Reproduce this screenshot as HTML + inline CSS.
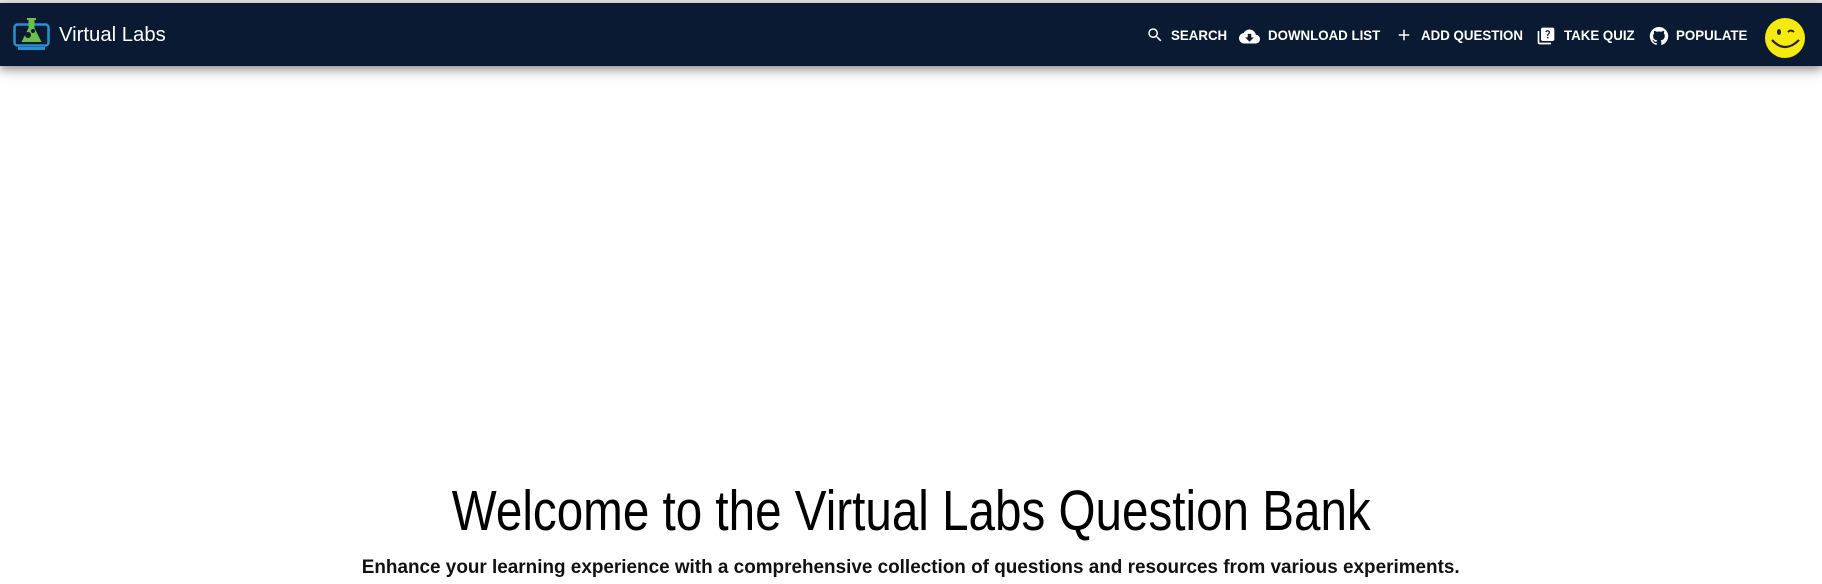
<!DOCTYPE html>
<html><head><meta charset="utf-8"><style>
html,body{margin:0;padding:0;width:1822px;height:584px;overflow:hidden;background:#fff;font-family:"Liberation Sans",sans-serif}
.top{position:absolute;left:0;top:0;width:1822px;height:3px;background:#e6e6e6}
.nav{position:absolute;left:0;top:3px;width:1822px;height:63px;background:#0b1a33;box-shadow:0 3px 8px rgba(0,0,0,.35),0 6px 14px rgba(0,0,0,.15)}
.brand{position:absolute;left:59px;top:21px;color:#fff;font-size:20.3px}
.it{position:absolute;top:24px;color:#fff;font-size:14px;font-weight:bold;letter-spacing:0;transform-origin:left center;transform:scaleX(.95);white-space:nowrap}
.ic{position:absolute;top:23px}
.smile{position:absolute;left:1765px;top:15px;width:40px;height:40px;border-radius:50%;background:#f5ea10}
h1{position:absolute;left:0;top:478px;width:1822px;text-align:center;margin:0;font-weight:normal;font-size:57px;color:#000}
h1 span{display:inline-block;transform:scaleX(.835)}
p{position:absolute;left:0;top:557px;width:1822px;text-align:center;margin:0;font-weight:bold;font-size:19px;color:#111}
p span{display:inline-block;transform:scaleX(.995)}
</style></head><body>
<div class="top"></div>
<div class="nav">
<svg style="position:absolute;left:13px;top:13px" width="37" height="36" viewBox="0 0 37 36">
<rect x="1.5" y="8.5" width="34" height="21" rx="3" fill="none" stroke="#2a8fd0" stroke-width="2.5"/>
<rect x="5" y="31" width="27" height="3" fill="#2a8fd0"/>
<path d="M14 2h9v2h-1.5v8l7 14h-20l7-14V4H14z" fill="#6cc04a"/>
<circle cx="15" cy="19" r="3" fill="#0b1a33"/><circle cx="20" cy="15" r="2" fill="#0b1a33"/>
</svg>
<div class="brand">Virtual Labs</div>
<svg class="ic" style="left:1146px" width="18" height="18" viewBox="0 0 24 24"><path fill="#fff" d="M15.5 14h-.79l-.28-.27A6.47 6.47 0 0 0 16 9.5 6.5 6.5 0 1 0 9.5 16c1.610 0 3.09-.59 4.23-1.57l.27.28v.79l5 4.99L20.49 19zm-6 0C7.01 14 5 11.990 5 9.5S7.01 5 9.5 5 14 7.01 14 9.5 11.99 14 9.5 14"/></svg>
<div class="it" style="left:1171px">SEARCH</div>
<svg class="ic" style="left:1239px" width="21" height="21" viewBox="0 0 24 24"><path fill="#fff" d="M19.35 10.04A7.49 7.49 0 0 0 12 4C9.11 4 6.6 5.64 5.35 8.04A5.994 5.994 0 0 0 0 14c0 3.31 2.69 6 6 6h13c2.76 0 5-2.24 5-5 0-2.64-2.05-4.78-4.65-4.96M17 13l-5 5-5-5h3V9h4v4z"/></svg>
<div class="it" style="left:1268px">DOWNLOAD LIST</div>
<svg class="ic" style="left:1395px" width="18" height="18" viewBox="0 0 24 24"><path fill="#fff" d="M19 13h-6v6h-2v-6H5v-2h6V5h2v6h6z"/></svg>
<div class="it" style="left:1421px">ADD QUESTION</div>
<svg class="ic" style="left:1536px" width="20" height="20" viewBox="0 0 24 24"><path fill="#fff" d="M4 6H2v14c0 1.1.9 2 2 2h14v-2H4zm16-4H8c-1.1 0-2 .9-2 2v12c0 1.1.9 2 2 2h12c1.1 0 2-.9 2-2V4c0-1.1-.9-2-2-2m-5.99 13c-.59 0-1.05-.47-1.05-1.05 0-.59.47-1.04 1.05-1.04.59 0 1.04.45 1.04 1.04 0 .58-.45 1.05-1.04 1.05m2.5-6.17c-.63.93-1.23 1.21-1.560 1.81-.13.24-.18.4-.18 1.18h-1.52c0-.41-.06-1.08.26-1.65.41-.73 1.18-1.16 1.63-1.8.48-.68.21-1.94-1.14-1.94-.88 0-1.32.67-1.5 1.23l-1.37-.57C11.51 5.96 12.52 5 13.99 5c1.23 0 2.08.56 2.51 1.26.37.61.58 1.73.01 2.57"/></svg>
<div class="it" style="left:1564px">TAKE QUIZ</div>
<svg class="ic" style="left:1649px" width="20" height="20" viewBox="0 0 24 24"><path fill="#fff" d="M12 1.27a11 11 0 0 0-3.48 21.46c.55.09.73-.28.73-.55v-1.84c-3.03.64-3.67-1.46-3.67-1.46-.55-1.29-1.28-1.65-1.28-1.65-.92-.65.1-.65.1-.65 1.1 0 1.73 1.1 1.73 1.1.92 1.65 2.57 1.2 3.21.92a2 2 0 0 1 .64-1.47c-2.470-.27-5.04-1.19-5.04-5.5 0-1.1.46-2.1 1.2-2.84a3.76 3.76 0 0 1 0-2.93s.91-.28 3.11 1.1c1.8-.49 3.7-.49 5.5 0 2.1-1.38 3.02-1.1 3.02-1.1a3.76 3.76 0 0 1 0 2.93c.83.74 1.2 1.74 1.2 2.94 0 4.21-2.57 5.13-5.04 5.4.45.37.82.92.82 2.02v3.03c0 .27.1.64.73.55A11 11 0 0 0 12 1.27"/></svg>
<div class="it" style="left:1676px">POPULATE</div>
<div class="smile"><svg width="40" height="40" viewBox="0 0 40 40"><ellipse cx="14" cy="14" rx="2" ry="3" fill="#222"/><path d="M23 14q3-3 6 0" stroke="#222" stroke-width="2" fill="none"/><path d="M7 22q13 14 27 0" stroke="#222" stroke-width="2.2" fill="none"/></svg></div>
</div>
<h1><span>Welcome to the Virtual Labs Question Bank</span></h1>
<p><span>Enhance your learning experience with a comprehensive collection of questions and resources from various experiments.</span></p>
</body></html>
